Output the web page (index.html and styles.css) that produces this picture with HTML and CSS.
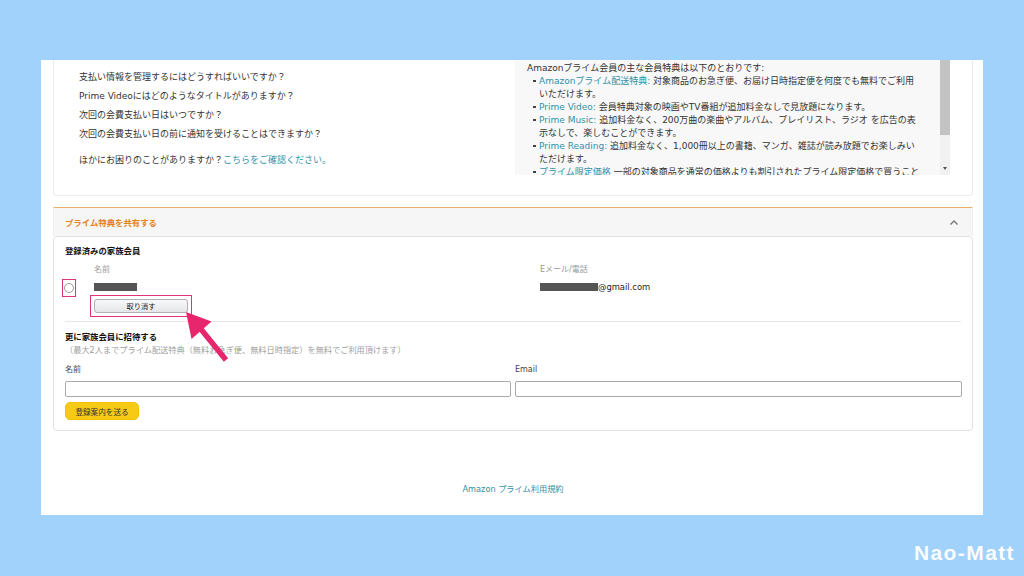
FILE: index.html
```html
<!DOCTYPE html>
<html lang="ja">
<head>
<meta charset="utf-8">
<title>プライム特典を共有する</title>
<link rel="stylesheet" href="styles.css">
</head>
<body>
<div class="frame">
  <div class="panel">
    <div class="top-card">
      <ul class="faq">
        <li>支払い情報を管理するにはどうすればいいですか？</li>
        <li>Prime Videoにはどのようなタイトルがありますか？</li>
        <li>次回の会費支払い日はいつですか？</li>
        <li>次回の会費支払い日の前に通知を受けることはできますか？</li>
        <li class="more">ほかにお困りのことがありますか？<a class="link">こちらをご確認ください。</a></li>
      </ul>
      <div class="benefits">
        <div class="benefits-body">
          <div>Amazonプライム会員の主な会員特典は以下のとおりです:</div>
          <ul>
            <li><a class="link">Amazonプライム配送特典:</a> 対象商品のお急ぎ便、お届け日時指定便を何度でも無料でご利用<br>いただけます。</li>
            <li><a class="link">Prime Video:</a> 会員特典対象の映画やTV番組が追加料金なしで見放題になります。</li>
            <li><a class="link">Prime Music:</a> 追加料金なく、200万曲の楽曲やアルバム、プレイリスト、ラジオ を広告の表<br>示なしで、楽しむことができます。</li>
            <li><a class="link">Prime Reading:</a> 追加料金なく、1,000冊以上の書籍、マンガ、雑誌が読み放題でお楽しみい<br>ただけます。</li>
            <li><a class="link">プライム限定価格</a> 一部の対象商品を通常の価格よりも割引されたプライム限定価格で買うこと<br>ができます。</li>
          </ul>
        </div>
        <div class="scrollbar">
          <div class="thumb"></div>
          <div class="track"></div>
          <svg class="sb-arrow" width="10" height="8" viewBox="0 0 10 8"><polygon points="3,2 7,2 5,5" fill="#555"/></svg>
        </div>
      </div>
    </div>

    <div class="share-head">
      <span class="share-title">プライム特典を共有する</span>
      <svg width="10" height="7" viewBox="0 0 10 7"><polyline points="1.5,5.5 5,2 8.5,5.5" fill="none" stroke="#777" stroke-width="1.4"/></svg>
    </div>

    <div class="share-card">
      <h3 class="title">登録済みの家族会員</h3>
      <div class="member">
        <div class="radio-mark"><span class="radio"></span></div>
        <div class="name-col">
          <div class="label">名前</div>
          <div class="redact name-redact"></div>
          <div class="btn-mark"><button class="cancel">取り消す</button></div>
        </div>
        <div class="email-col">
          <div class="label">Eメール/電話</div>
          <div class="email"><span class="redact email-redact"></span>@gmail.com</div>
        </div>
      </div>
      <div class="divider"></div>
      <h3 class="title invite-title">更に家族会員に招待する</h3>
      <p class="note">（最大2人までプライム配送特典（無料お急ぎ便、無料日時指定）を無料でご利用頂けます）</p>
      <div class="invite">
        <label class="field"><span>名前</span><input type="text"></label>
        <label class="field"><span>Email</span><input type="text"></label>
      </div>
      <button class="send">登録案内を送る</button>
    </div>

    <div class="footer"><a class="link">Amazon プライム利用規約</a></div>

    <svg class="arrow" width="52" height="62" viewBox="180 303 52 62">
      <line x1="200" y1="328" x2="226" y2="360" stroke="#e8266d" stroke-width="5.5"/>
      <polygon points="186,312 211.5,321.5 191.5,339" fill="#e8266d"/>
    </svg>
  </div>
  <div class="brand">Nao-Matt</div>
</div>
</body>
</html>
```

FILE: styles.css
```css
* { box-sizing: border-box; }

body {
  margin: 0;
  background: #a0d2fb;
  font-family: "DejaVu Sans", "Noto Sans CJK JP", sans-serif;
  color: #333;
}

.frame {
  padding: 60px 41px 0 41px;
  height: 576px;
}

.panel {
  position: relative;
  height: 455px;
  background: #fff;
  padding: 0 10px 0 12px;
  overflow: hidden;
}

.link { color: #3191a8; text-decoration: none; }

/* top card */
.top-card {
  display: flex;
  height: 136px;
  border: 1px solid #ececec;
  border-top: 0;
  border-radius: 0 0 4px 4px;
}

.faq {
  list-style: none;
  margin: 0;
  padding: 7.5px 0 0 25px;
  font-size: 9px;
  line-height: 19px;
  white-space: nowrap;
}
.faq .more { margin-top: 7px; }

.benefits {
  margin-left: auto;
  margin-right: 22px;
  width: 435px;
  height: 115px;
  display: flex;
  background: #f8f8f8;
}
.benefits-body {
  flex: 1;
  overflow: hidden;
  padding: 1.5px 0 0 12px;
  font-size: 9px;
  line-height: 13px;
  white-space: nowrap;
}
.benefits-body ul {
  list-style: none;
  margin: 0;
  padding: 0 0 0 12px;
}
.benefits-body li { position: relative; }
.benefits-body li::before {
  content: "";
  position: absolute;
  left: -6px;
  top: 5px;
  width: 2.5px;
  height: 2.5px;
  background: #444;
}

.scrollbar {
  width: 10px;
  display: flex;
  flex-direction: column;
  background: #f1f1f1;
}
.thumb { height: 75px; background: #c3c3c3; }
.track { flex: 1; }
.sb-arrow { display: block; margin-bottom: 2px; }

/* share header */
.share-head {
  margin-top: 11px;
  height: 29px;
  display: flex;
  align-items: center;
  justify-content: space-between;
  padding: 0 13px 0 11px;
  background: #f6f6f6;
  border-top: 1px solid #eab06c;
  border-left: 1px solid #eee;
  border-right: 1px solid #eee;
}
.share-title {
  color: #e4821c;
  font-weight: bold;
  font-size: 8.4px;
}

/* share card */
.share-card {
  height: 195px;
  border: 1px solid #e2e2e2;
  border-radius: 4px;
  padding: 7px 11px 0 11px;
}
.title {
  margin: 0;
  font-size: 8.4px;
  line-height: 14px;
  font-weight: bold;
  color: #111;
}

.member {
  display: flex;
  margin-top: 6px;
}
.radio-mark {
  margin-top: 16px;
  margin-left: -2px;
  width: 12px;
  height: 16px;
  display: flex;
  align-items: center;
  justify-content: center;
  outline: 1.6px solid #e0337a;
  outline-offset: 0.5px;
}
.radio {
  width: 10px;
  height: 10px;
  border: 1px solid #9a9a9a;
  border-radius: 50%;
  background: #fff;
}
.name-col {
  margin-left: 19px;
  width: 446px;
}
.label {
  font-size: 8px;
  line-height: 12px;
  color: #9a9a9a;
}
.redact {
  display: inline-block;
  height: 8px;
  background: #555;
}
.name-redact {
  display: block;
  width: 43px;
  margin-top: 7px;
}
.btn-mark {
  margin-top: 8px;
  width: 94px;
  outline: 1.6px solid #e0337a;
  outline-offset: 3.5px;
}
.cancel {
  display: block;
  width: 94px;
  height: 14px;
  padding: 0;
  border: 1px solid #adb1b8;
  border-radius: 3px;
  background: linear-gradient(#f7f8fa, #e4e6e9);
  font-family: inherit;
  font-size: 7.2px;
  color: #222;
}
.email {
  margin-top: 5px;
  font-size: 8.4px;
  line-height: 12px;
  color: #222;
}
.email-redact {
  width: 58px;
  vertical-align: -1px;
}

.divider {
  margin-top: 8px;
  height: 1px;
  background: #e8e8e8;
}
.invite-title { margin-top: 8px; }
.note {
  margin: 0;
  font-size: 8.2px;
  line-height: 12px;
  color: #a0a0a0;
}

.invite {
  margin-top: 8px;
  display: grid;
  grid-template-columns: 446px 447px;
  gap: 4px;
}
.field { display: flex; flex-direction: column; }
.field span {
  font-size: 8px;
  line-height: 12px;
  color: #444;
}
.field input {
  margin-top: 5px;
  height: 16px;
  border: 1px solid #a9a9a9;
  border-radius: 2px;
  background: #fff;
}

.send {
  display: block;
  margin-top: 5px;
  width: 74px;
  height: 18px;
  padding: 0;
  border: 1px solid #f2c200;
  border-radius: 5px;
  background: #f7ca15;
  font-family: inherit;
  font-size: 7.6px;
  color: #333;
}

.footer {
  margin-top: 52px;
  text-align: center;
  font-size: 8.2px;
  line-height: 12px;
}

.arrow {
  position: absolute;
  left: 139px;
  top: 243px;
}

.brand {
  height: 61px;
  margin-right: -32px;
  padding-top: 26px;
  text-align: right;
  font-family: "Liberation Sans", sans-serif;
  font-size: 21px;
  font-weight: bold;
  letter-spacing: 1.4px;
  color: #fafcff;
  line-height: 24px;
}
```
